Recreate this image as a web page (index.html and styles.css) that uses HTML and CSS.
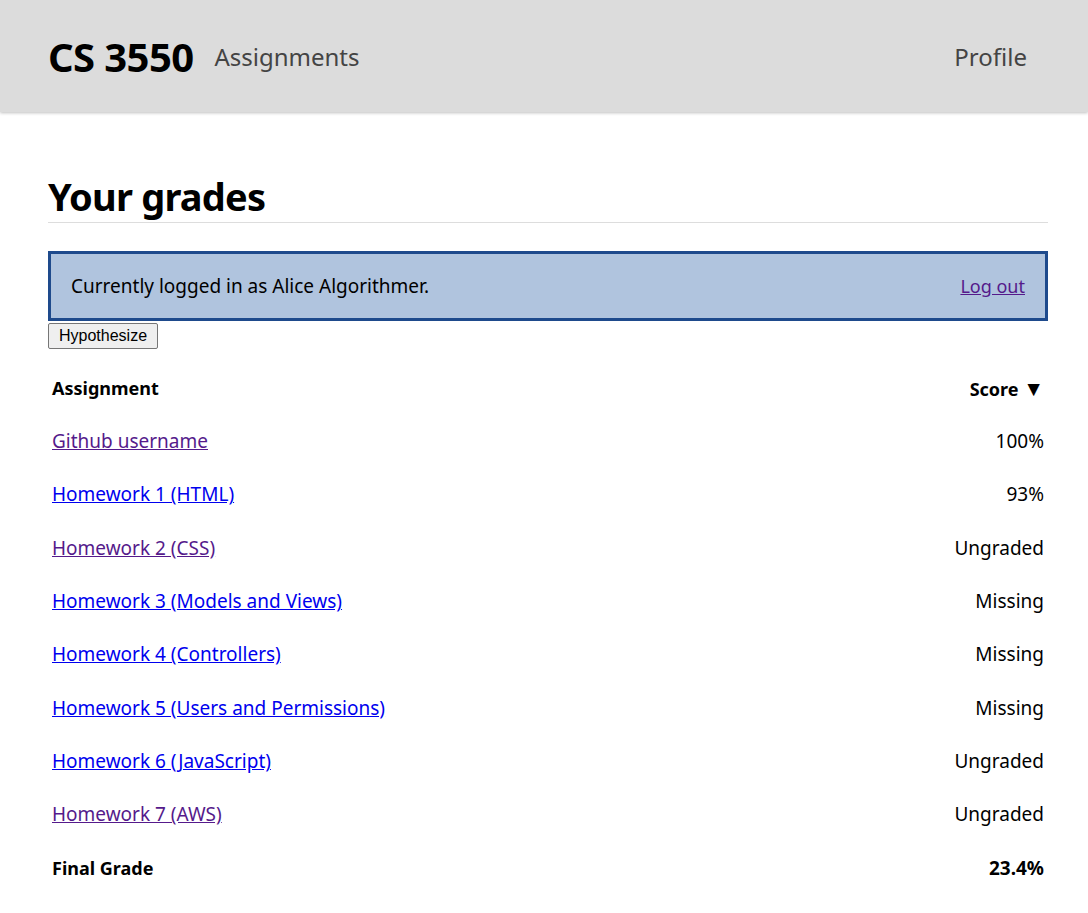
FILE: index.html
```html
<!DOCTYPE html>
<html>
<head>
<meta charset="utf-8">
<link rel="stylesheet" href="styles.css">
</head>
<body>
<header class="topbar">
  <div class="brand">
    <span class="course">CS 3550</span>
    <a class="nav-link" href="#">Assignments</a>
  </div>
  <a class="nav-link" href="#">Profile</a>
</header>
<main class="content">
  <h1 class="page-title">Your grades</h1>
  <div class="login-box">
    <span>Currently logged in as Alice Algorithmer.</span>
    <a class="visited" href="#">Log out</a>
  </div>
  <button class="hypo-btn" type="button">Hypothesize</button>
  <table class="grades">
    <thead>
      <tr><th class="left">Assignment</th><th class="right">Score <span class="arrow">▼</span></th></tr>
    </thead>
    <tbody>
      <tr><td><a class="visited" href="#">Github username</a></td><td class="right">100%</td></tr>
      <tr><td><a class="link" href="#">Homework 1 (HTML)</a></td><td class="right">93%</td></tr>
      <tr><td><a class="visited" href="#">Homework 2 (CSS)</a></td><td class="right">Ungraded</td></tr>
      <tr><td><a class="link" href="#">Homework 3 (Models and Views)</a></td><td class="right">Missing</td></tr>
      <tr><td><a class="link" href="#">Homework 4 (Controllers)</a></td><td class="right">Missing</td></tr>
      <tr><td><a class="link" href="#">Homework 5 (Users and Permissions)</a></td><td class="right">Missing</td></tr>
      <tr><td><a class="link" href="#">Homework 6 (JavaScript)</a></td><td class="right">Ungraded</td></tr>
      <tr><td><a class="visited" href="#">Homework 7 (AWS)</a></td><td class="right">Ungraded</td></tr>
    </tbody>
    <tfoot>
      <tr><th class="left">Final Grade</th><th class="right">23.4%</th></tr>
    </tfoot>
  </table>
</main>
</body>
</html>
```
FILE: styles.css
```css
html, body {
  margin: 0;
  padding: 0;
}
body {
  font-family: "Noto Sans", "Open Sans", sans-serif;
  font-size: 19px;
  color: #000;
  background: #fff;
}
.topbar {
  height: 112px;
  background: #dcdcdc;
  box-shadow: 0 1px 3px rgba(0,0,0,0.25);
  display: flex;
  align-items: center;
  justify-content: space-between;
  padding: 0 61px 0 48px;
  box-sizing: border-box;
}
.brand {
  display: flex;
  align-items: center;
  gap: 21px;
}
.course {
  font-size: 40px;
  font-weight: 700;
  letter-spacing: -0.6px;
}
.nav-link {
  font-size: 24px;
  color: #444;
  text-decoration: none;
}
.content {
  width: 1000px;
  margin: 0 0 0 48px;
  padding-top: 60px;
}
.page-title {
  font-size: 38px;
  font-weight: 700;
  margin: 0;
  line-height: 48px;
  padding-bottom: 2px;
  border-bottom: 1px solid #ddd;
  letter-spacing: -0.8px;
}
.login-box {
  margin-top: 28px;
  height: 70px;
  box-sizing: border-box;
  border: 3px solid #1e4a8c;
  background: #b0c4de;
  display: flex;
  align-items: center;
  justify-content: space-between;
  padding: 0 20px;
  font-size: 19px;
}
.login-box a {
  font-size: 18px;
}
.visited {
  color: #551a8b;
}
.link {
  color: #0000ee;
}
.hypo-btn {
  margin-top: 2px;
  display: block;
  font-family: "Liberation Sans", Arial, sans-serif;
  font-size: 16px;
  padding: 1px 10px;
  height: 26px;
  background: #efefef;
  border: 1px solid #767676;
  border-radius: 2px;
  color: #000;
}
.grades {
  margin-top: 12px;
  width: 1000px;
  border-collapse: collapse;
}
.grades tr {
  height: 53.33px;
}
.grades th, .grades td {
  padding: 0 4px;
  vertical-align: middle;
  font-size: 19px;
}
.grades th {
  font-weight: 700;
  font-size: 18px;
}
.grades tfoot .right {
  font-size: 19px;
}
.arrow {
  font-size: 21px;
}
.left {
  text-align: left;
}
.right {
  text-align: right;
}
```
